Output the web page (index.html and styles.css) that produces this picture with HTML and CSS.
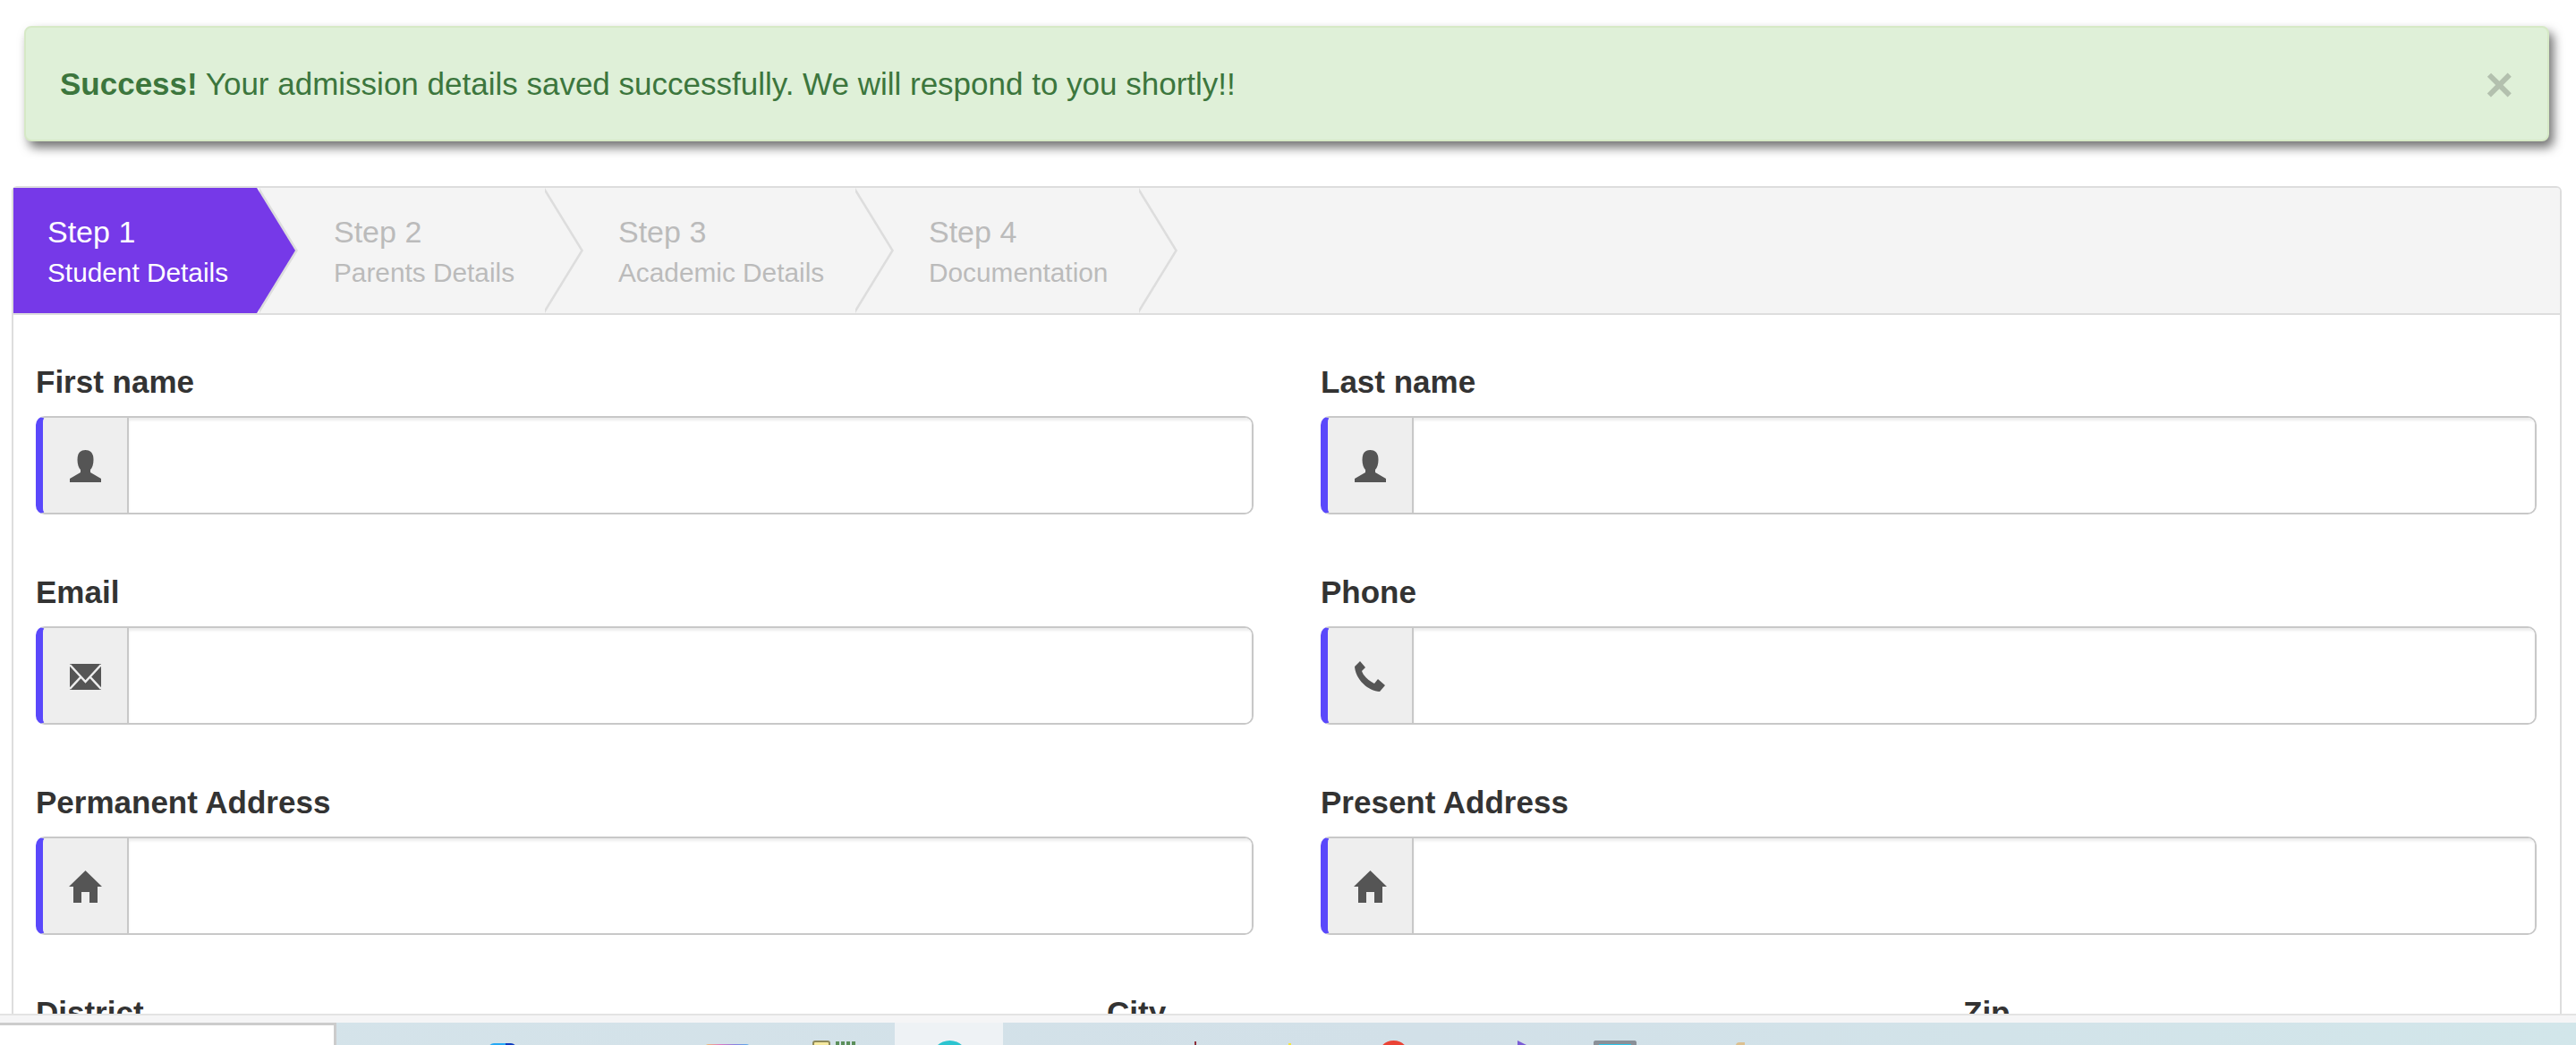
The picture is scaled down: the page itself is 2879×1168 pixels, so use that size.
FILE: index.html
```html
<!DOCTYPE html>
<html>
<head>
    <link rel="stylesheet" href="styles.css">
</head>
<body>
    <div class="screen">
        <div class="page">
            <div class="alert">
                <span><strong>Success!</strong> Your admission details saved successfully. We will respond to you shortly!!</span>
                <span class="close">&times;</span>
            </div>

            <div class="panel">
                <div class="steps">
                    <div class="step active">
                        <span class="step-title">Step 1</span>
                        <span class="step-sub">Student Details</span>
                    </div>
                    <div class="step step-two">
                        <span class="step-title">Step 2</span>
                        <span class="step-sub">Parents Details</span>
                    </div>
                    <div class="step step-three">
                        <span class="step-title">Step 3</span>
                        <span class="step-sub">Academic Details</span>
                    </div>
                    <div class="step step-four">
                        <span class="step-title">Step 4</span>
                        <span class="step-sub">Documentation</span>
                    </div>
                </div>

                <form class="form">
                    <div class="row">
                        <div class="field">
                            <label for="firstName">First name</label>
                            <div class="input-group">
                                <span class="addon">
                                    <svg class="icon-user" viewBox="0 0 35 36"><path d="M17.5 0C10.5 0 8.5 5 8.5 11C8.5 16 10 20 12 22V25L0 32V36H35V32L23 25V22C25 20 26.5 16 26.5 11C26.5 5 24.500 0 17.5 0Z"/></svg>
                                </span>
                                <input type="text" id="firstName">
                            </div>
                        </div>
                        <div class="field">
                            <label for="lastName">Last name</label>
                            <div class="input-group">
                                <span class="addon">
                                    <svg class="icon-user" viewBox="0 0 35 36"><path d="M17.5 0C10.5 0 8.5 5 8.5 11C8.5 16 10 20 12 22V25L0 32V36H35V32L23 25V22C25 20 26.5 16 26.5 11C26.5 5 24.500 0 17.5 0Z"/></svg>
                                </span>
                                <input type="text" id="lastName">
                            </div>
                        </div>
                    </div>

                    <div class="row">
                        <div class="field">
                            <label for="email">Email</label>
                            <div class="input-group">
                                <span class="addon">
                                    <svg class="icon-mail" viewBox="0 0 35 29">
                                        <rect width="35" height="29"/>
                                        <path class="mail-line" d="M0 1L17.500 20L35 1M0 28L12 15M35 28L23 15"/>
                                    </svg>
                                </span>
                                <input type="email" id="email">
                            </div>
                        </div>
                        <div class="field">
                            <label for="phone">Phone</label>
                            <div class="input-group">
                                <span class="addon">
                                    <svg class="icon-phone" viewBox="0 0 34 34"><path d="M6 0L12 7L8 11C10 17 16 22 22 25L26 20L34 27L28 34C14 33 1 20 0 6Z"/></svg>
                                </span>
                                <input type="tel" id="phone">
                            </div>
                        </div>
                    </div>

                    <div class="row">
                        <div class="field">
                            <label for="permAddress">Permanent Address</label>
                            <div class="input-group">
                                <span class="addon">
                                    <svg class="icon-home" viewBox="0 0 37 36"><path d="M18.500 0L37 18H32V36H23V24H14V36H5V18H0Z"/></svg>
                                </span>
                                <input type="text" id="permAddress">
                            </div>
                        </div>
                        <div class="field">
                            <label for="presAddress">Present Address</label>
                            <div class="input-group">
                                <span class="addon">
                                    <svg class="icon-home" viewBox="0 0 37 36"><path d="M18.500 0L37 18H32V36H23V24H14V36H5V18H0Z"/></svg>
                                </span>
                                <input type="text" id="presAddress">
                            </div>
                        </div>
                    </div>

                    <div class="row row-three">
                        <div class="field"><label>District</label></div>
                        <div class="field"><label>City</label></div>
                        <div class="field"><label>Zip</label></div>
                    </div>
                </form>
            </div>
        </div>

        <div class="strip"></div>

        <div class="taskbar">
            <div class="search-box"></div>
            <span class="tb tb-blue"></span>
            <span class="tb tb-rainbow"></span>
            <span class="tb tb-note"></span>
            <span class="tb tb-green"></span>
            <div class="tb-active"><span class="tb tb-teal"></span></div>
            <span class="tb tb-stick"></span>
            <span class="tb tb-yellow"></span>
            <span class="tb tb-red"></span>
            <span class="tb tb-purple"></span>
            <span class="tb tb-gray"></span>
            <span class="tb tb-tan"></span>
        </div>
    </div>
</body>
</html>
```

FILE: styles.css
```css
* {
    box-sizing: border-box;
}

body {
    margin: 0;
    background-color: #fff;
    font-family: "Liberation Sans", Arial, sans-serif;
    color: #333;
}

.screen {
    height: 1168px;
    display: flex;
    flex-direction: column;
    overflow: hidden;
}

.page {
    height: 1135px;
    flex: none;
    overflow: hidden;
    border-bottom: 2px solid #e3e3e3;
}

/* alert */
.alert {
    height: 129px;
    margin: 29px 30px 0 27px;
    padding: 0 38px 0 38px;
    display: flex;
    align-items: center;
    justify-content: space-between;
    background-color: #dff0d8;
    border: 2px solid #d6e9c6;
    border-radius: 8px;
    box-shadow: 5px 7px 12px rgba(0, 0, 0, 0.55);
    color: #3c763d;
    font-size: 35px;
}

.close {
    font-size: 54px;
    font-weight: bold;
    line-height: 1;
    color: #b3c0ae;
}

/* steps */
.panel {
    margin: 50px 16px 0 13px;
    border: 2px solid #ddd;
    border-radius: 6px;
    height: 1000px;
}

.steps {
    height: 142px;
    display: flex;
    background-color: #f4f4f4;
    border-bottom: 2px solid #ddd;
    border-radius: 4px 4px 0 0;
}

.step {
    position: relative;
    flex: none;
    display: flex;
    flex-direction: column;
    justify-content: center;
    padding: 4px 0 0 85px;
    color: #bbb;
}

.step::before,
.step::after {
    content: "";
    position: absolute;
    top: 0;
    right: -43px;
    width: 43px;
    height: 100%;
    clip-path: polygon(0 0, 100% 50%, 0 100%);
    background-color: #f4f4f4;
    z-index: 2;
}

.step::before {
    right: -46px;
    background-color: #ddd;
}

.step.active {
    width: 272px;
    padding-left: 38px;
    background-color: #7639e8;
    color: #fff;
}

.step.active::after {
    background-color: #7639e8;
}

.step-two {
    width: 319px;
    padding-left: 86px;
}

.step-three {
    width: 347px;
}

.step-four {
    width: 317px;
}

.step-title {
    font-size: 34px;
    line-height: 45px;
}

.step-sub {
    font-size: 29.800px;
    line-height: 45px;
}

/* form */
.form {
    padding: 55px 25px 0 25px;
}

.row {
    display: grid;
    grid-template-columns: 1361px 1359px;
    column-gap: 75px;
    margin-bottom: 67px;
}

.row-three {
    grid-template-columns: 1197px 957px 1fr;
    column-gap: 0;
}

label {
    display: block;
    height: 40px;
    margin-bottom: 18px;
    font-size: 35px;
    font-weight: bold;
    line-height: 40px;
}

.input-group {
    height: 110px;
    display: flex;
    border: 2px solid #c8c8c8;
    border-left: 8px solid #5a48fb;
    border-radius: 10px;
    overflow: hidden;
}

.addon {
    width: 96px;
    flex: none;
    display: flex;
    align-items: center;
    justify-content: center;
    padding-top: 2px;
    background-color: #eee;
    border-right: 2px solid #c8c8c8;
}

.addon svg {
    fill: #555;
}

.input-group input {
    flex: 1;
    min-width: 0;
    border: 0;
    outline: 0;
    background-color: #fff;
    box-shadow: inset 0 3px 3px rgba(0, 0, 0, 0.075);
}

.icon-user {
    width: 35px;
    height: 36px;
}

.icon-mail {
    width: 35px;
    height: 29px;
}

.mail-line {
    fill: none;
    stroke: #eee;
    stroke-width: 2.500;
}

.icon-phone {
    width: 34px;
    height: 34px;
}

.icon-home {
    width: 37px;
    height: 36px;
}

/* bottom of the window */
.strip {
    height: 8px;
    flex: none;
    background-color: #f5f5f6;
}

.taskbar {
    flex: 1;
    display: flex;
    overflow: hidden;
    background: linear-gradient(to right, #d5e4ea, #d2e0e8 55%, #d2e6ea);
}

.search-box {
    width: 376px;
    flex: none;
    background-color: #fff;
    border-top: 3px solid #ccc;
    border-right: 3px solid #ccc;
}

.tb {
    flex: none;
    display: block;
    height: 40px;
}

.tb-blue {
    width: 31px;
    margin: 23px 0 0 170px;
    background: linear-gradient(to right, #25a8f5 60%, #0c3cc0 60%);
    border-radius: 6px;
}

.tb-rainbow {
    width: 50px;
    margin: 24px 0 0 211px;
    background: linear-gradient(to right, #f2c36b, #e078c0, #8a80e0, #56b0ea);
    border-radius: 4px;
}

.tb-note {
    width: 20px;
    margin: 20px 0 0 70px;
    background-color: #f5e9a0;
    border: 2px solid #8f8a5a;
    border-radius: 3px;
}

.tb-green {
    width: 23px;
    margin: 21px 0 0 6px;
    background: repeating-linear-gradient(to right, #5b8f5b 0 4px, transparent 4px 6px);
}

.tb-active {
    width: 121px;
    flex: none;
    margin-left: 43px;
    padding-left: 41px;
    background-color: #eef2f5;
}

.tb-teal {
    width: 41px;
    height: 41px;
    margin-top: 20px;
    background-color: #2cc4d0;
    border-radius: 50%;
}

.tb-stick {
    width: 2px;
    margin: 21px 0 0 214px;
    background-color: #8c2f3a;
}

.tb-yellow {
    width: 3px;
    margin: 23px 0 0 103px;
    background-color: #f5e63c;
}

.tb-red {
    width: 35px;
    height: 35px;
    margin: 20px 0 0 97px;
    background-color: #ea4335;
    border-radius: 50%;
}

.tb-purple {
    width: 12px;
    margin: 20px 0 0 121px;
    background-color: #7a5cd6;
    clip-path: polygon(0 0, 100% 15%, 0 60%);
}

.tb-gray {
    width: 48px;
    margin: 20px 0 0 73px;
    border-top: 4px solid #8a9098;
    border-left: 6px solid #8a9098;
    border-right: 6px solid #8a9098;
    border-radius: 3px 3px 0 0;
    background-color: #2fc6ea;
    background-clip: padding-box;
}

.tb-tan {
    width: 10px;
    margin: 22px 0 0 111px;
    background-color: #dcc090;
    border-radius: 4px 0 0 0;
}
```
